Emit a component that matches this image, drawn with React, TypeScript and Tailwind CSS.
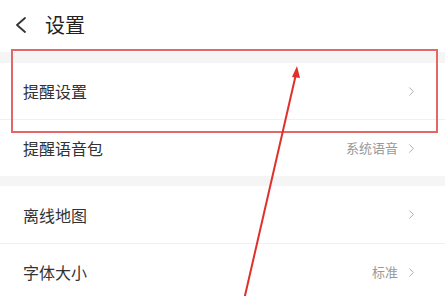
import { ChevronRight } from "lucide-react";

const font = { fontFamily: '"Noto Sans CJK SC", "Noto Sans", sans-serif' };

type Row = { label: string; value?: string; divider?: boolean; h: string };

function SettingRow({ label, value, divider, h }: Row) {
  return (
    <div className={`flex items-center justify-between pl-[23px] pr-[26px] bg-white ${h} ${divider ? "border-b border-[#f0f0f0]" : ""}`}>
      <span className="text-[16px] text-[#333]">{label}</span>
      <div className="flex items-center gap-[6px]">
        {value && <span className="text-[13px] text-[#999]">{value}</span>}
        <ChevronRight className="w-[15px] h-[15px] text-[#aaa]" strokeWidth={1.5} />
      </div>
    </div>
  );
}

export default function App() {
  return (
    <div className="relative w-[445px] h-[296px] overflow-hidden bg-white" style={font}>
      {/* Header */}
      <div className="flex items-center h-[52px] pl-[15px] pb-[3px] gap-[18px]">
        <svg width="12" height="16" viewBox="0 0 12 16" className="text-[#333]">
          <polyline points="10,1 2,8 10,15" fill="none" stroke="currentColor" strokeWidth="1.8" strokeLinecap="round" strokeLinejoin="round" />
        </svg>
        <span className="text-[20px] text-[#222]">设置</span>
      </div>

      <div className="h-[11px] bg-[#f5f5f5]" />
      <SettingRow label="提醒设置" divider h="h-[57px]" />
      <SettingRow label="提醒语音包" value="系统语音" h="h-[56px]" />

      <div className="h-[10px] bg-[#f5f5f5]" />
      <SettingRow label="离线地图" divider h="h-[58px]" />
      <SettingRow label="字体大小" value="标准" h="h-[56px]" />

      {/* annotation box */}
      <div className="absolute left-[11px] top-[49px] w-[427px] h-[84px] border-2 border-[#e36767]" />

      {/* annotation arrow */}
      <svg className="absolute inset-0" width="445" height="296" viewBox="0 0 445 296">
        <line x1="244" y1="300" x2="296" y2="74" stroke="#e0302a" strokeWidth="2" />
        <polygon points="297,66 292,77 300,78" fill="#e0302a" />
      </svg>
    </div>
  );
}
